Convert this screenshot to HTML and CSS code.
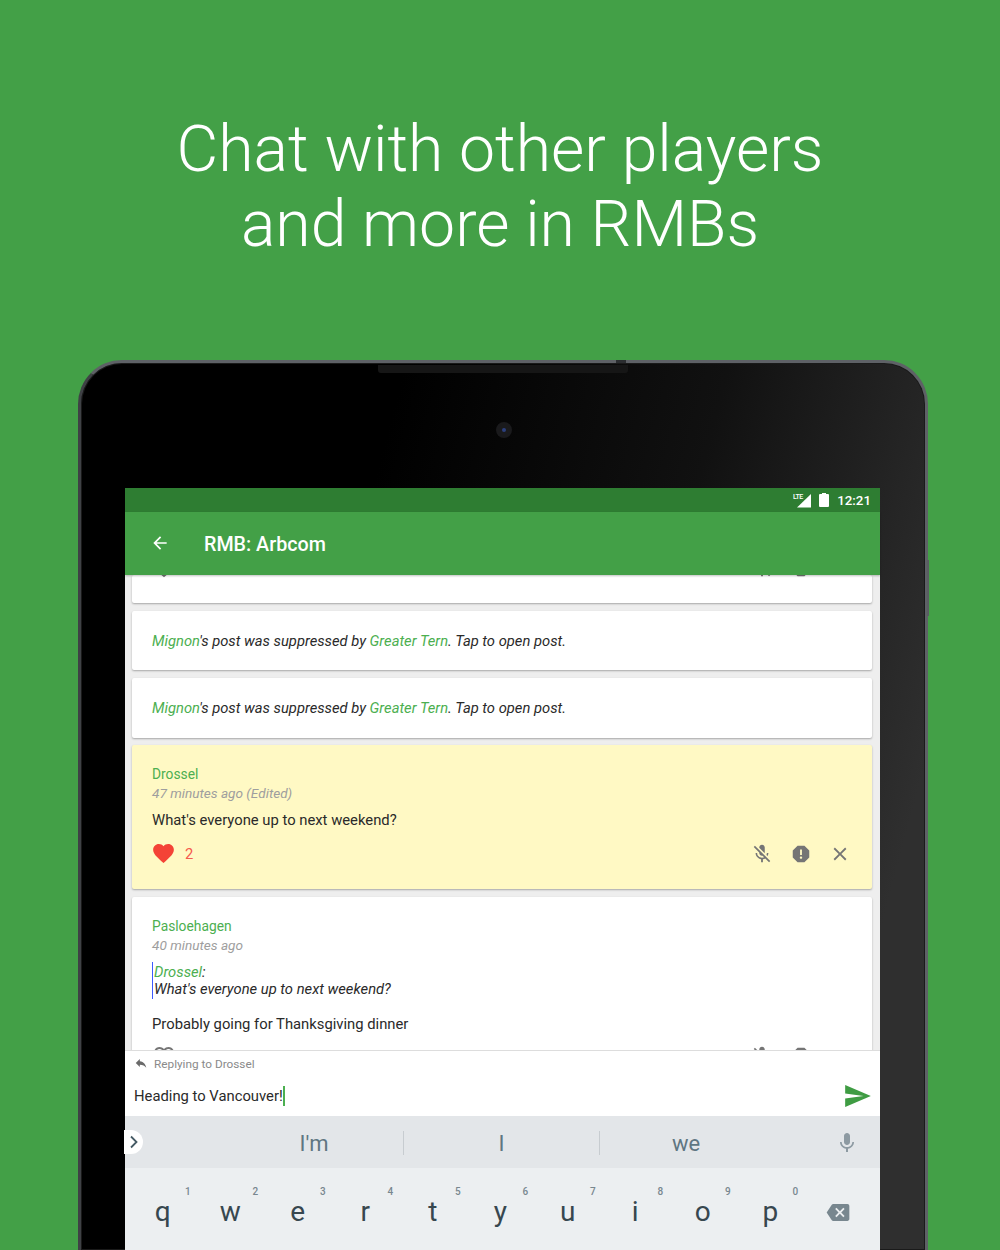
FILE: index.html
```html
<!DOCTYPE html>
<html lang="en">
<head>
    <meta charset="UTF-8">
    <meta name="viewport" content="width=device-width, initial-scale=1.0">
    <title>Chat with other players</title>
    <link rel="stylesheet" href="styles.css">
</head>
<body>
    <h1 class="headline">Chat with other players<br>and more in RMBs</h1>

    <div class="tablet">
        <div class="speaker"></div>
        <div class="power-notch"></div>
        <div class="side-button"></div>
        <div class="camera"><div class="lens"></div></div>

        <div class="screen">
            <div class="status-bar">
                <svg class="signal" viewBox="0 0 18 15">
                    <text x="0" y="6" class="lte">LTE</text>
                    <polygon points="18,1 18,14.5 4,14.5"/>
                </svg>
                <svg class="battery" viewBox="0 0 10 14">
                    <path d="M3 0h4v1h2a1 1 0 0 1 1 1v11a1 1 0 0 1-1 1H1a1 1 0 0 1-1-1V2a1 1 0 0 1 1-1h2z"/>
                </svg>
                <span class="clock">12:21</span>
            </div>

            <div class="toolbar">
                <svg class="back" viewBox="0 0 24 24"><path d="M20 11H7.83l5.59-5.59L12 4l-8 8 8 8 1.41-1.41L7.83 13H20v-2z"/></svg>
                <span class="toolbar-title">RMB: Arbcom</span>
            </div>

            <div class="posts">
                <div class="card card-cut">
                    <div class="actions actions-other">
                        <svg class="heart-line" viewBox="0 0 24 24"><path d="M16.5 3c-1.74 0-3.41.81-4.5 2.09C10.91 3.81 9.24 3 7.5 3 4.42 3 2 5.42 2 8.5c0 3.78 3.4 6.86 8.55 11.54L12 21.35l1.45-1.32C18.6 15.36 22 12.28 22 8.5 22 5.42 19.58 3 16.5 3zm-4.4 15.55l-.1.1-.1-.1C7.14 14.24 4 11.39 4 8.5 4 6.5 5.5 5 7.5 5c1.54 0 3.04.99 3.57 2.36h1.87C13.46 5.99 14.96 5 16.5 5c2 0 3.5 1.5 3.5 3.5 0 2.89-3.14 5.74-7.9 10.05z"/></svg>
                        <span class="spacer"></span>
                        <svg class="action" viewBox="0 0 24 24"><path d="M19 11h-1.7c0 .74-.16 1.43-.43 2.05l1.23 1.23c.56-.98.9-2.09.9-3.28zm-4.02.17c0-.06.02-.11.02-.17V5c0-1.66-1.34-3-3-3S9 3.34 9 5v.18l5.98 5.99zM4.27 3L3 4.27l6.01 6.01V11c0 1.66 1.33 3 2.99 3 .22 0 .44-.03.65-.08l1.66 1.66c-.71.33-1.5.52-2.31.52-2.76 0-5.3-2.1-5.3-5.1H5c0 3.41 2.72 6.23 6 6.72V21h2v-3.28c.91-.13 1.77-.45 2.54-.9L19.73 21 21 19.73 4.27 3z"/></svg>
                        <svg class="action" viewBox="0 0 24 24"><path d="M15.73 3H8.27L3 8.27v7.46L8.27 21h7.46L21 15.73V8.27L15.73 3zM12 17.3c-.72 0-1.3-.58-1.3-1.3 0-.72.58-1.3 1.3-1.3.72 0 1.3.58 1.3 1.3 0 .72-.58 1.3-1.3 1.3zm1-4.3h-2V7h2v6z"/></svg>
                    </div>
                </div>

                <div class="card card-note">
                    <span class="name">Mignon</span>'s post was suppressed by <span class="name">Greater Tern</span>. Tap to open post.
                </div>
                <div class="card card-note">
                    <span class="name">Mignon</span>'s post was suppressed by <span class="name">Greater Tern</span>. Tap to open post.
                </div>

                <div class="card card-post card-yellow">
                    <div class="author">Drossel</div>
                    <div class="time">47 minutes ago (Edited)</div>
                    <div class="body">What's everyone up to next weekend?</div>
                    <div class="actions">
                        <svg class="heart" viewBox="2 3 20 18.35"><path d="M12 21.35l-1.45-1.32C5.4 15.36 2 12.28 2 8.5 2 5.42 4.42 3 7.5 3c1.74 0 3.41.81 4.5 2.09C13.09 3.81 14.76 3 16.5 3 19.58 3 22 5.42 22 8.5c0 3.78-3.4 6.86-8.55 11.54L12 21.35z"/></svg>
                        <span class="like-count">2</span>
                        <span class="spacer"></span>
                        <svg class="action" viewBox="0 0 24 24"><path d="M19 11h-1.7c0 .74-.16 1.43-.43 2.05l1.23 1.23c.56-.98.9-2.09.9-3.28zm-4.02.17c0-.06.02-.11.02-.17V5c0-1.66-1.34-3-3-3S9 3.34 9 5v.18l5.98 5.99zM4.27 3L3 4.27l6.01 6.01V11c0 1.66 1.33 3 2.99 3 .22 0 .44-.03.65-.08l1.66 1.66c-.71.33-1.5.52-2.31.52-2.76 0-5.3-2.1-5.3-5.1H5c0 3.41 2.72 6.23 6 6.72V21h2v-3.28c.91-.13 1.77-.45 2.54-.9L19.73 21 21 19.73 4.27 3z"/></svg>
                        <svg class="action" viewBox="0 0 24 24"><path d="M15.73 3H8.27L3 8.27v7.46L8.27 21h7.46L21 15.73V8.27L15.73 3zM12 17.3c-.72 0-1.3-.58-1.3-1.3 0-.72.58-1.3 1.3-1.3.72 0 1.3.58 1.3 1.3 0 .72-.58 1.3-1.3 1.3zm1-4.3h-2V7h2v6z"/></svg>
                        <svg class="action" viewBox="0 0 24 24"><path d="M19 6.41L17.59 5 12 10.59 6.41 5 5 6.41 10.59 12 5 17.59 6.41 19 12 13.41 17.59 19 19 17.59 13.41 12z"/></svg>
                    </div>
                </div>

                <div class="card card-post">
                    <div class="author">Pasloehagen</div>
                    <div class="time">40 minutes ago</div>
                    <div class="quote"><span class="name">Drossel</span>:<br>What's everyone up to next weekend?</div>
                    <div class="body body-reply">Probably going for Thanksgiving dinner</div>
                    <div class="actions actions-other">
                        <svg class="heart-line" viewBox="0 0 24 24"><path d="M16.5 3c-1.74 0-3.41.81-4.5 2.09C10.91 3.81 9.24 3 7.5 3 4.42 3 2 5.42 2 8.5c0 3.78 3.4 6.86 8.55 11.54L12 21.35l1.45-1.32C18.6 15.36 22 12.28 22 8.5 22 5.42 19.58 3 16.5 3zm-4.4 15.55l-.1.1-.1-.1C7.14 14.24 4 11.39 4 8.5 4 6.5 5.5 5 7.5 5c1.54 0 3.04.99 3.57 2.36h1.87C13.46 5.99 14.96 5 16.5 5c2 0 3.5 1.5 3.5 3.5 0 2.89-3.14 5.74-7.9 10.05z"/></svg>
                        <span class="spacer"></span>
                        <svg class="action" viewBox="0 0 24 24"><path d="M19 11h-1.7c0 .74-.16 1.43-.43 2.05l1.23 1.23c.56-.98.9-2.09.9-3.28zm-4.02.17c0-.06.02-.11.02-.17V5c0-1.66-1.34-3-3-3S9 3.34 9 5v.18l5.98 5.99zM4.27 3L3 4.27l6.01 6.01V11c0 1.66 1.33 3 2.99 3 .22 0 .44-.03.65-.08l1.66 1.66c-.71.33-1.5.52-2.31.52-2.76 0-5.3-2.1-5.3-5.1H5c0 3.41 2.72 6.23 6 6.72V21h2v-3.28c.91-.13 1.77-.45 2.54-.9L19.73 21 21 19.73 4.27 3z"/></svg>
                        <svg class="action" viewBox="0 0 24 24"><path d="M15.73 3H8.27L3 8.27v7.46L8.27 21h7.46L21 15.73V8.27L15.73 3zM12 17.3c-.72 0-1.3-.58-1.3-1.3 0-.72.58-1.3 1.3-1.3.72 0 1.3.58 1.3 1.3 0 .72-.58 1.3-1.3 1.3zm1-4.3h-2V7h2v6z"/></svg>
                    </div>
                </div>
            </div>

            <div class="reply-bar">
                <div class="reply-to">
                    <svg class="reply-icon" viewBox="0 0 24 24"><path d="M10 9V5l-7 7 7 7v-4.1c5 0 8.5 1.6 11 5.1-1-5-4-10-11-11z"/></svg>
                    <span>Replying to Drossel</span>
                </div>
                <div class="reply-input">
                    <span class="reply-text">Heading to Vancouver!</span><span class="caret"></span>
                    <span class="spacer"></span>
                    <svg class="send" viewBox="2 3 21 18"><path d="M2.01 21L23 12 2.01 3 2 10l15 2-15 2z"/></svg>
                </div>
            </div>

            <div class="suggestions">
                <div class="chevron">
                    <svg viewBox="0 0 10 14"><path d="M2 1.5L7.5 7 2 12.5" fill="none" stroke="#455a64" stroke-width="1.8"/></svg>
                </div>
                <span class="word word-first">I'm</span>
                <span class="word word-mid">I</span>
                <span class="word word-last">we</span>
                <svg class="kb-mic" viewBox="0 0 24 24"><path d="M12 14c1.66 0 3-1.34 3-3V5c0-1.66-1.34-3-3-3S9 3.34 9 5v6c0 1.66 1.34 3 3 3zm5.3-3c0 3-2.54 5.1-5.3 5.1S6.7 14 6.7 11H5c0 3.41 2.72 6.23 6 6.72V21h2v-3.28c3.28-.48 6-3.3 6-6.72h-1.7z"/></svg>
            </div>

            <div class="keys">
                <div class="key"><sup>1</sup>q</div>
                <div class="key"><sup>2</sup>w</div>
                <div class="key"><sup>3</sup>e</div>
                <div class="key"><sup>4</sup>r</div>
                <div class="key"><sup>5</sup>t</div>
                <div class="key"><sup>6</sup>y</div>
                <div class="key"><sup>7</sup>u</div>
                <div class="key"><sup>8</sup>i</div>
                <div class="key"><sup>9</sup>o</div>
                <div class="key"><sup>0</sup>p</div>
                <div class="key">
                    <svg class="backspace" viewBox="0 3 24 18"><path d="M22 3H7c-.69 0-1.23.35-1.59.88L0 12l5.41 8.11c.36.53.9.89 1.59.89h15c1.1 0 2-.9 2-2V5c0-1.1-.9-2-2-2zm-3 12.59L17.59 17 14 13.41 10.41 17 9 15.59 12.59 12 9 8.41 10.41 7 14 10.59 17.59 7 19 8.41 15.41 12 19 15.59z"/></svg>
                </div>
            </div>
        </div>
    </div>
</body>
</html>
```

FILE: styles.css
```css
html, body {
    margin: 0;
    height: 1250px;
    overflow: hidden;
}
body {
    background-color: #43a047;
    font-family: Roboto, "Liberation Sans", sans-serif;
}
.spacer {
    flex: 1;
}

.headline {
    margin: 0;
    padding-top: 112px;
    height: 360px;
    box-sizing: border-box;
    text-align: center;
    color: white;
    font-weight: 300;
    font-size: 64.3px;
    line-height: 75px;
}

/* tablet body */
.tablet {
    position: relative;
    box-sizing: border-box;
    width: 850px;
    height: 890px;
    margin-left: 78px;
    padding: 125px 44px 0 44px;
    border: 3px solid #5e6166;
    border-left-color: #3f4145;
    border-bottom: none;
    border-radius: 44px 44px 0 0;
    background: linear-gradient(105deg, #000 30%, #111 60%, #2f2f2f 88%);
    box-shadow: inset 0 0 0 1px #1a1a1a;
}
.speaker {
    position: absolute;
    top: 2px;
    left: 297px;
    width: 250px;
    height: 8px;
    border-radius: 0 0 3px 3px;
    background-color: #161616;
    background-image: radial-gradient(#2a2a2a 0.6px, transparent 0.7px);
    background-size: 2px 2px;
}
.power-notch {
    position: absolute;
    top: -3px;
    left: 535px;
    width: 10px;
    height: 3px;
    background-color: #2b2d30;
}
.side-button {
    position: absolute;
    top: 197px;
    right: -4px;
    width: 2px;
    height: 56px;
    background-color: #5a5d62;
}
.camera {
    position: absolute;
    top: 59px;
    left: 415px;
    width: 16px;
    height: 16px;
    border-radius: 50%;
    background-color: #1a1a1c;
    display: flex;
    align-items: center;
    justify-content: center;
}
.lens {
    width: 4px;
    height: 4px;
    border-radius: 50%;
    background-color: #2b3f7e;
}

/* screen */
.screen {
    width: 755px;
    background-color: #eeeeee;
}
.status-bar {
    height: 24px;
    background-color: #2e7d32;
    display: flex;
    align-items: center;
    justify-content: flex-end;
    padding-right: 9px;
    color: white;
}
.signal {
    width: 18px;
    height: 15px;
    fill: white;
    overflow: visible;
}
.lte {
    font-size: 7px;
    font-weight: 500;
    letter-spacing: -0.5px;
}
.battery {
    width: 10px;
    height: 14px;
    margin-left: 8px;
    fill: white;
}
.clock {
    margin-left: 8px;
    font-size: 13.3px;
    font-weight: 500;
}
.toolbar {
    position: relative;
    z-index: 1;
    height: 63px;
    background-color: #43a047;
    display: flex;
    align-items: center;
    box-shadow: 0 1px 2px rgba(0, 0, 0, 0.25);
}
.back {
    width: 20px;
    height: 20px;
    margin-left: 25px;
    margin-top: -2px;
    fill: white;
}
.toolbar-title {
    margin-left: 34px;
    margin-top: 2px;
    color: white;
    font-size: 19.7px;
    font-weight: 500;
}

/* posts */
.posts {
    height: 475px;
    overflow: hidden;
    padding: 0 8px 0 7px;
    display: flex;
    flex-direction: column;
    gap: 8px;
}
.card {
    flex: none;
    border-radius: 2px;
    background-color: white;
    box-shadow: 0 1px 2px rgba(0, 0, 0, 0.3);
    font-size: 14.75px;
    color: #2a2a2a;
}
.card-cut {
    height: 28px;
    box-sizing: border-box;
    padding: 0 20px 23px;
    display: flex;
    flex-direction: column;
    justify-content: flex-end;
}
.card-note {
    height: 59px;
    box-sizing: border-box;
    padding: 21px 20px 0;
    font-style: italic;
    line-height: 18px;
}
.card-note + .card-note {
    height: 60px;
    margin-top: -0.5px;
}
.card-post {
    padding: 20px 20px 0;
}
.card-yellow {
    height: 144px;
    box-sizing: border-box;
    margin-top: -1px;
    background-color: #fff9c4;
}
.name {
    color: #4caf50;
}
.author {
    color: #4caf50;
    font-size: 13.8px;
    line-height: 18px;
}
.time {
    margin-top: 1px;
    color: #9e9e9e;
    font-size: 13.6px;
    font-style: italic;
    line-height: 19px;
}
.body {
    margin-top: 7px;
    font-size: 14.8px;
    line-height: 20px;
}
.actions {
    flex: none;
    display: flex;
    align-items: center;
    margin-top: 13px;
    padding-right: 1px;
    gap: 17px;
}
.actions-other {
    margin-top: 10px;
    padding-right: 40px;
}
.card-cut .actions-other {
    margin-top: 0;
}
.heart {
    width: 21px;
    height: 19px;
    margin-left: 1px;
    margin-right: -6px;
    fill: #f44336;
}
.heart-line {
    width: 24px;
    height: 24px;
    fill: #757575;
}
.like-count {
    color: #f55a4e;
}
.action {
    width: 22px;
    height: 22px;
    fill: #757575;
}
.quote {
    margin-top: 7px;
    padding: 2px 0 1px 1px;
    border-left: 1px solid #3d5afe;
    font-style: italic;
    line-height: 17px;
}
.body-reply {
    margin-top: 15px;
}

/* reply bar */
.reply-bar {
    position: relative;
    height: 66px;
    box-sizing: border-box;
    background-color: white;
    border-top: 1px solid #ddd;
}
.reply-to {
    display: flex;
    align-items: center;
    height: 25px;
    padding-left: 9px;
    gap: 6px;
    color: #8a8a8a;
    font-size: 11.8px;
}
.reply-icon {
    width: 14px;
    height: 14px;
    margin-top: -2px;
    fill: #6a6a6a;
}
.reply-input {
    display: flex;
    align-items: center;
    height: 40px;
    padding: 0 9px;
    font-size: 14.8px;
    color: #2a2a2a;
}
.caret {
    width: 2px;
    height: 20px;
    background-color: #4caf50;
}
.send {
    width: 26px;
    height: 22px;
    fill: #3f9c43;
}

/* keyboard */
.suggestions {
    position: relative;
    height: 52px;
    background-color: #e3e6e9;
    color: #5f7682;
    font-size: 22px;
    display: grid;
    grid-template-columns: 278px 197px 280px;
    align-items: center;
    padding-top: 2px;
    box-sizing: border-box;
}
.chevron {
    position: absolute;
    left: -1px;
    top: 14px;
    width: 19px;
    height: 24px;
    border-radius: 0 12px 12px 0;
    background-color: white;
    display: flex;
    align-items: center;
    justify-content: center;
}
.chevron svg {
    width: 10px;
    height: 14px;
}
.word {
    display: flex;
    align-items: center;
    height: 24px;
}
.word-first {
    justify-content: center;
    padding-left: 100px;
    box-sizing: border-box;
    width: 278px;
}
.word-mid {
    justify-content: center;
    border-left: 1px solid #c7ccd0;
    border-right: 1px solid #c7ccd0;
}
.word-last {
    padding-left: 72px;
}
.kb-mic {
    position: absolute;
    right: 21px;
    top: 15px;
    width: 24px;
    height: 24px;
    fill: #8d9aa2;
}
.keys {
    height: 90px;
    box-sizing: border-box;
    padding-left: 4px;
    background-color: #eceff1;
    display: grid;
    grid-template-columns: repeat(11, 67.5px);
    color: #37474f;
    font-size: 28px;
}
.key {
    position: relative;
    padding-top: 27px;
    text-align: center;
    line-height: 34px;
}
.key sup {
    position: absolute;
    top: 18px;
    left: 56px;
    font-size: 10px;
    line-height: 12px;
    font-weight: 500;
    color: #78878f;
}
.backspace {
    width: 24px;
    height: 17px;
    fill: #78878f;
    margin-top: 8px;
}
```
